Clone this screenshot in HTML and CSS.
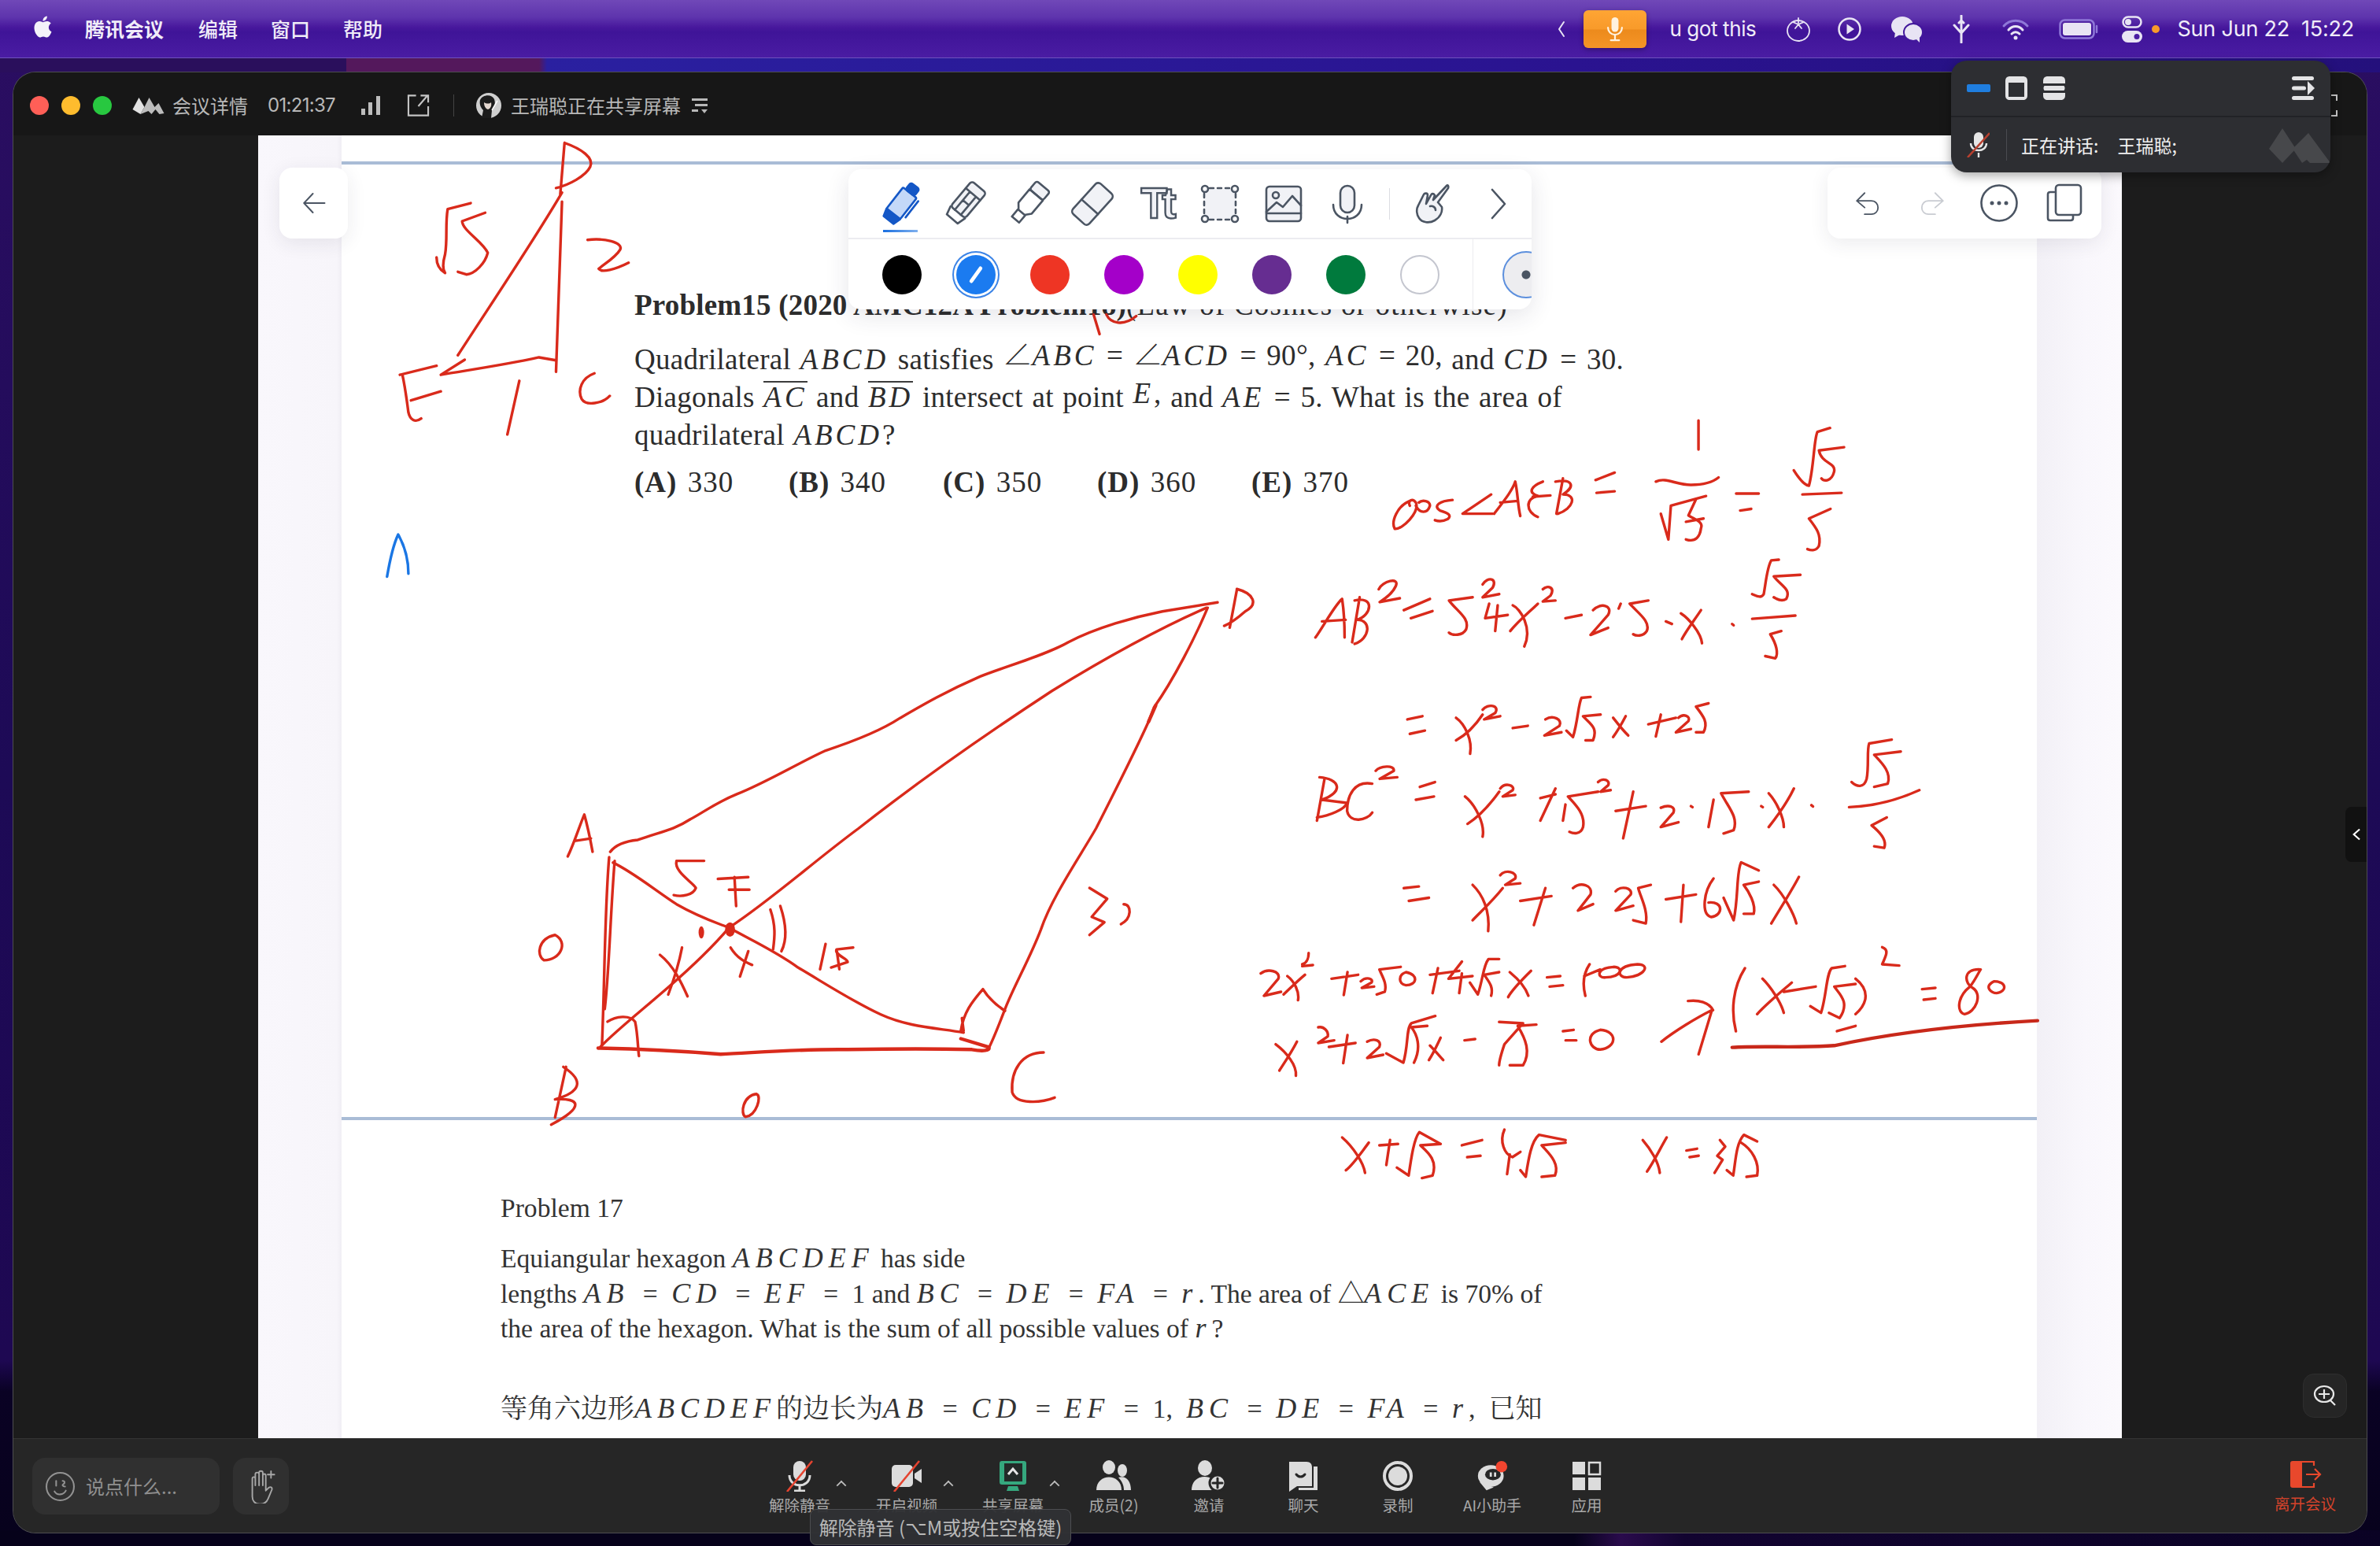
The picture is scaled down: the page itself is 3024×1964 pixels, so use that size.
FILE: index.html
```html
<!DOCTYPE html>
<html lang="zh">
<head>
<meta charset="utf-8">
<title>腾讯会议</title>
<link rel="stylesheet" href="styles.css">
</head>
<body>
<div class="desktop">
  <header class="menubar">
    <svg class="apple" viewBox="0 0 24 24"><path d="M12.152 6.896c-.948 0-2.415-1.078-3.96-1.04-2.04.027-3.91 1.183-4.961 3.014-2.117 3.675-.546 9.103 1.519 12.09 1.013 1.454 2.208 3.09 3.792 3.039 1.52-.065 2.09-.987 3.935-.987 1.831 0 2.35.987 3.96.948 1.637-.026 2.676-1.48 3.676-2.948 1.156-1.688 1.636-3.325 1.662-3.415-.039-.013-3.182-1.221-3.22-4.857-.026-3.04 2.48-4.494 2.597-4.559-1.429-2.09-3.623-2.324-4.39-2.376-2-.156-3.675 1.09-4.61 1.09zM15.53 3.83c.843-1.012 1.4-2.427 1.245-3.83-1.207.052-2.662.805-3.532 1.818-.78.896-1.454 2.338-1.273 3.714 1.338.104 2.715-.688 3.559-1.701"/></svg>
    <span class="menu-app">腾讯会议</span>
    <span class="menu-item">编辑</span>
    <span class="menu-item">窗口</span>
    <span class="menu-item">帮助</span>
    <div class="status">
      <svg class="st st-chev" viewBox="0 0 10 22"><path d="M8 2 2 11l6 9"/></svg>
      <div class="rec"><svg viewBox="0 0 24 36"><rect x="7" y="1" width="10" height="21" rx="5" class="solid"/><path d="M2 16a10 10 0 0 0 20 0M12 27v6M6 34h12"/></svg></div>
      <span class="st-text">u got this</span>
      <svg class="st st-tomato" viewBox="0 0 32 32"><ellipse cx="16" cy="18" rx="14" ry="13"/><path d="M16 2v6M9 7l7 3 7-3M16 10l-4 5M16 10l4 5"/></svg>
      <svg class="st st-play" viewBox="0 0 32 32"><circle cx="16" cy="16" r="13.5"/><path d="M12.500 9.500 22 16l-9.500 6.500z" class="solid"/></svg>
      <svg class="st st-wechat" viewBox="0 0 42 34"><ellipse cx="15" cy="13" rx="14" ry="12" class="solid"/><path d="m6 21-1 7 7-4z" class="solid"/><ellipse cx="29" cy="21" rx="12" ry="11" class="solid edge"/><path d="m33 30 4 4 0-7z" class="solid"/></svg>
      <svg class="st st-fork" viewBox="0 0 26 36"><path d="M13 1v34M4 13l9 10 9-10M13 7l-3 3M13 7l3 3"/></svg>
      <svg class="st st-wifi" viewBox="0 0 36 28"><path class="dim" d="M3 10C11 1 25 1 33 10"/><path d="M9 15c5-6 13-6 18 0M13 20c3-3 7-3 10 0"/><circle cx="18" cy="25" r="2.500" class="solid"/></svg>
      <svg class="st st-batt" viewBox="0 0 50 26"><rect x="1.500" y="1.500" width="43" height="23" rx="6" class="dim"/><rect x="5" y="5" width="36" height="16" rx="3" class="solid"/><path d="M48 9v8" class="dim"/></svg>
      <svg class="st st-ctl" viewBox="0 0 26 34"><rect x="1.500" y="1.500" width="23" height="13" rx="6.500"/><circle cx="8" cy="8" r="4" class="solid"/><rect x="0" y="19" width="26" height="15" rx="7.500" class="solid"/><circle cx="19" cy="26.500" r="3.500" class="hole"/></svg>
      <span class="st-dot"></span>
      <span class="st-clock">Sun Jun 22&nbsp; 15:22</span>
    </div>
  </header>

  <main class="window">
    <div class="titlebar">
      <span class="light red"></span><span class="light amber"></span><span class="light green"></span>
      <svg class="logo" viewBox="0 0 40 24"><path d="M0 17 8 2l7 12-5 9z" class="logo-a"/><path d="M10 23l5-9 6-12 7 12 5-5 7 13-6 1-5-6-5 6-4-4z"/></svg>
      <span class="tb-text tb-info">会议详情</span>
      <span class="tb-text tb-time">01:21:37</span>
      <svg class="tb-signal" viewBox="0 0 26 24"><path d="M1 16h5v8H1zM10 8h5v16h-5zM20 0h5v24h-5z"/></svg>
      <svg class="tb-share" viewBox="0 0 30 28"><path d="M12 1H2v26h26V15M15 15 27 1M18 1h10v9"/></svg>
      <span class="tb-sep"></span>
      <svg class="avatar" viewBox="0 0 32 32"><circle cx="16" cy="16" r="16" fill="#cfcfcf"/><path d="M5 9C8 2 20 1 23 8c2 6 0 11-3 14l-1 10H7l2-10C5 18 4 13 5 9z" fill="#1c1c1c"/><path d="M10 12c3 2 7 2 9 0 1 5-1 8-4 9-3-1-5-4-5-9z" fill="#e4d8d0"/><path d="M27 10 20 22" stroke="#fff" stroke-width="1.500"/></svg>
      <span class="tb-text tb-sharer">王瑞聪正在共享屏幕</span>
      <svg class="tb-menu" viewBox="0 0 20 20"><path d="M0 1h20v3H0zM4 8h16v3H4zM0 15h8v3H0z"/><path d="M12 15h8l-4 5z"/></svg>
      <svg class="tb-full" viewBox="0 0 30 28"><path d="M8 1H1v7M22 1h7v7M1 20v7h7M29 20v7h-7"/></svg>
    </div>

    <section class="stage">
      <div class="doc">
        <div class="paper">
          <hr class="rule">
          <div class="prob15">
            <p class="p15-title">Problem15 (2020 AMC12A Problem18)<span class="plain">(Law of Cosines or otherwise)</span></p>
            <p class="p15-body">Quadrilateral <i>ABCD</i> satisfies <span class="up">∠<i>ABC</i> = ∠<i>ACD</i> = 90°, <i>AC</i> = 20,</span> and <span class="m"><i>CD</i> = 30.</span><br>Diagonals <span class="bar"><i>AC</i></span> and <span class="bar"><i>BD</i></span> intersect at point <span class="up"><i>E</i>,</span> and <span class="m"><i>AE</i> = 5.</span> What is the area of<br>quadrilateral <i>ABCD</i>?</p>
            <div class="choices">
              <span><b>(A)</b> 330</span><span><b>(B)</b> 340</span><span><b>(C)</b> 350</span><span><b>(D)</b> 360</span><span><b>(E)</b> 370</span>
            </div>
          </div>
          <hr class="rule">
          <div class="prob17">
            <p class="p17-title">Problem 17</p>
            <p class="p17-body">Equiangular hexagon <i>ABCDEF</i> has side<br>lengths <span class="m"><i>AB</i> = <i>CD</i> = <i>EF</i> = 1</span> and <span class="m"><i>BC</i> = <i>DE</i> = <i>FA</i> = <i>r</i>.</span> The area of △<i>ACE</i> is 70% of<br>the area of the hexagon. What is the sum of all possible values of <i>r</i>?</p>
            <p class="p17-cn">等角六边形<i>ABCDEF</i>的边长为<span class="m"><i>AB</i> = <i>CD</i> = <i>EF</i> = 1,</span> &nbsp;<span class="m"><i>BC</i> = <i>DE</i> = <i>FA</i> = <i>r</i>,</span> &nbsp;已知</p>
          </div>
        </div>

        <svg class="ink" viewBox="328 172 2368 1655">
          <g transform="translate(430 170) scale(1.0842 .3827)">
            <path d="M265 30C285 50 300 80 295 110 290 140 270 170 255 180M265 30 260 200"/>
            <path d="M262 195C230 350 180 560 140 735"/>
            <path d="M262 225 255 790"/>
            <path d="M120 800C150 785 190 770 235 742L255 752M148 750 120 800"/>
            <path d="M155 230 128 250C125 300 128 350 125 400 122 430 122 450 125 462 118 450 115 435 115 410"/>
            <path d="M172 262 145 290C145 320 170 360 175 395 172 430 160 465 150 467L140 458"/>
            <path d="M292 352C310 345 335 360 330 385 325 410 310 435 305 448 308 462 325 450 340 428"/>
            <path d="M115 770 72 800M120 855 85 885M75 800C78 840 80 880 82 925 84 950 90 960 97 945"/>
            <path d="M300 795C285 810 280 850 285 880 290 905 310 895 318 870"/>
            <path d="M212 820 198 998"/>
            <path d="M885 600 892 665M900 600C905 630 920 640 935 605"/>
          </g>
          <g class="blue" transform="translate(430 170) scale(1.0842 .3827)">
            <path d="M57 1470C60 1420 65 1360 70 1330 78 1370 82 1420 82 1460"/>
          </g>

          <g transform="translate(600 740) scale(.7015 .4592)">
            <path d="M250 745C260 725 280 715 300 712 340 690 365 685 395 655 420 635 440 610 480 585 530 555 590 500 640 465 690 440 740 410 775 375 820 335 860 300 920 260 970 230 1040 200 1080 165 1130 125 1200 95 1250 80L1350 55"/>
            <path d="M255 775C290 800 330 850 370 890 410 925 440 940 465 955 500 985 550 1020 590 1065 640 1110 690 1160 740 1195 790 1230 840 1232 890 1245"/>
            <path d="M232 1285C260 1240 310 1180 355 1120 400 1060 440 1000 465 955 540 880 620 770 700 680 800 560 930 420 1050 300 1130 225 1240 130 1330 70"/>
            <path d="M1332 70C1310 150 1270 270 1235 345L1225 385C1200 470 1160 590 1130 680 1100 760 1050 870 1030 960 1010 1040 980 1120 965 1180 955 1220 945 1260 935 1290"/>
            <path class="thick" d="M1238 340 1225 385"/>
            <path d="M248 760C240 900 240 1100 235 1280M258 770C250 920 248 1080 240 1180"/>
            <path class="thick" d="M228 1288C300 1290 370 1295 450 1305 520 1300 600 1290 680 1292 760 1290 850 1290 905 1292 925 1298 940 1295 935 1285L885 1262"/>
            <path d="M885 1240C890 1190 905 1160 925 1125 935 1150 950 1170 965 1185M887 1205 890 1240"/>
            <path d="M245 1215C260 1200 285 1195 295 1215 300 1250 300 1290 302 1310"/>
            <path d="M173 758C185 720 195 670 203 642 210 680 215 720 218 745M185 715 215 708"/>
            <path d="M150 975C120 985 115 1030 130 1045 160 1045 175 995 150 975Z"/>
            <path d="M420 770 370 770C365 800 400 830 405 845 400 865 380 870 365 865"/>
            <path d="M445 820 500 815M465 850 502 850M475 815 478 895"/>
            <ellipse class="dotfill" cx="467" cy="960" rx="9" ry="20"/>
            <ellipse class="dotfill" cx="415" cy="968" rx="5" ry="17"/>
            <path d="M540 905C550 950 548 980 545 1015M558 895C570 950 570 990 560 1020"/>
            <path d="M468 1010C480 1040 495 1050 507 1058M500 1020 485 1090"/>
            <path d="M340 1030C365 1060 380 1110 390 1145M380 1010C375 1050 365 1100 355 1140"/>
            <path d="M640 1000 630 1070M690 1010 660 1015C655 1030 680 1040 680 1050L650 1065M660 1015 665 1070"/>
            <path d="M1118 845 1150 875 1122 925 1145 940 1118 975M1180 890C1195 890 1195 930 1175 945"/>
            <path d="M1385 20 1372 125M1385 18C1415 30 1425 60 1400 80 1385 100 1370 115 1362 120"/>
            <path d="M170 1340 150 1480M165 1340C205 1380 195 1410 150 1430 195 1425 205 1450 143 1500"/>
            <path d="M1035 1300C995 1300 975 1350 978 1410 985 1445 1030 1440 1055 1425"/>
            <path d="M515 1415C490 1420 485 1470 495 1478 515 1475 525 1420 515 1415Z"/>
          </g>

          <g transform="translate(1600 520) scale(.6378 .4082)">
            <path d="M300 285C275 300 262 350 270 372 285 375 320 320 312 290 305 275 295 285 300 300M312 300C320 325 335 325 340 300 340 285 325 280 318 290M385 282C360 285 345 300 360 315 375 322 385 330 375 342 365 350 355 348 350 345"/>
            <path d="M462 265 405 325 465 325"/>
            <path d="M468 325C490 280 505 250 510 225 515 260 515 300 520 332M480 290 515 285"/>
            <path d="M565 225C540 240 535 260 555 270 530 275 530 320 555 335M545 272 580 268"/>
            <path d="M605 215 592 325M590 225C625 215 630 240 605 265 635 265 625 310 595 325"/>
            <path d="M670 220 708 197M672 260 708 255"/>
            <path d="M875 35 875 125M790 225C810 210 830 235 860 235 885 235 905 225 915 212"/>
            <path d="M800 325 815 405 820 300 890 270M870 280 855 330C870 345 885 350 880 370 878 395 870 415 850 405M850 350 885 340"/>
            <path d="M950 262 995 262M958 315 980 310"/>
            <path d="M1065 190C1075 215 1085 235 1095 238 1105 180 1105 90 1112 70L1137 58M1165 118 1115 128C1120 170 1150 165 1145 195 1140 225 1125 225 1120 215"/>
            <path d="M1082 265 1160 260M1138 310 1095 340C1110 370 1120 390 1115 425 1110 440 1100 440 1092 435"/>

            <path d="M112 710C130 670 150 610 165 590 170 640 170 680 170 710M125 660 172 655"/>
            <path d="M200 585 185 725M190 595C230 580 225 640 195 655 225 655 220 715 190 730"/>
            <path d="M238 560C245 535 280 520 272 550 265 575 250 590 240 600L280 588"/>
            <path d="M288 625 340 590M302 650 345 628"/>
            <path d="M425 585 378 595C395 630 420 650 412 685 405 705 385 705 378 695"/>
            <path d="M445 545C455 520 475 525 465 555L445 585 478 575"/>
            <path d="M458 605 450 650 495 640M475 610 470 690"/>
            <path d="M505 610C520 620 545 680 528 738M555 605C535 635 515 660 500 690"/>
            <path d="M565 560C575 545 590 555 580 580L565 598 590 595"/>
            <path d="M610 650 642 640M665 625C680 600 705 610 695 640L660 702 695 680M720 605 716 620"/>
            <path d="M775 595 738 605C755 635 780 660 772 690 765 708 750 705 745 700M810 660 822 668"/>
            <path d="M840 635C855 650 880 695 882 728M880 625C865 660 850 690 842 715M942 668 945 672"/>
            <path d="M982 575C990 580 1000 590 1005 575 1010 530 1012 490 1020 470L1035 468M1078 515 1025 520C1040 550 1060 560 1050 590 1040 600 1030 590 1025 585"/>
            <path d="M982 652 1068 642M1040 690 1018 700C1030 730 1035 760 1028 775L1008 768"/>

            <path d="M295 965 325 955M300 1010 330 1000"/>
            <path d="M392 960C410 980 425 1030 420 1072M445 950C430 985 410 1015 392 1030"/>
            <path d="M445 935C455 915 480 920 470 945L448 965 480 955M505 992 535 985"/>
            <path d="M570 965C585 950 605 965 598 985L568 1015 602 1005"/>
            <path d="M612 1000 625 1020C635 970 635 920 642 898L660 895M680 950 645 955C660 980 675 990 665 1030L650 1030"/>
            <path d="M705 960C715 980 725 1000 735 1015M730 955C720 985 712 1005 705 1020"/>
            <path d="M775 980 830 960M800 950 790 1018"/>
            <path d="M835 960C845 945 860 955 855 970L830 1005 860 995M895 915 870 925C885 955 895 975 885 1005L870 1005"/>

            <path d="M120 1145C160 1150 170 1190 125 1215L175 1225C170 1245 140 1265 115 1270M130 1150 115 1280"/>
            <path d="M225 1165C190 1155 175 1200 175 1250 180 1290 215 1280 225 1255"/>
            <path d="M232 1125C240 1110 270 1105 268 1125L240 1150 275 1145M320 1175 350 1160M312 1215 348 1205"/>
            <path d="M410 1205C430 1230 450 1290 445 1330M478 1190C455 1240 435 1270 415 1290"/>
            <path d="M480 1180C490 1160 510 1170 505 1185L485 1205 510 1200"/>
            <path d="M590 1180 560 1280M560 1210 590 1198M610 1230 605 1280"/>
            <path d="M675 1190 615 1205C630 1230 650 1260 645 1300 640 1325 625 1320 618 1315M675 1160C685 1145 700 1155 695 1170L680 1190 700 1185"/>
            <path d="M710 1250 770 1235M745 1190 725 1335M800 1240C815 1230 830 1235 825 1255L800 1300 835 1285M860 1235 863 1238"/>
            <path d="M905 1215 895 1300M975 1190 920 1195C935 1240 955 1270 945 1310L925 1320M1000 1235 1003 1238"/>
            <path d="M1015 1195C1030 1220 1045 1270 1045 1300M1065 1180C1050 1230 1030 1270 1015 1300M1100 1232 1103 1236"/>
            <path d="M1180 1160C1190 1175 1205 1180 1210 1150 1215 1110 1210 1060 1215 1040L1260 1028M1278 1065 1225 1075C1240 1100 1260 1130 1252 1165L1225 1175"/>
            <path d="M1175 1238C1230 1235 1280 1210 1315 1185M1250 1270 1220 1295C1240 1320 1250 1345 1245 1365L1225 1360"/>

            <path d="M288 1490 318 1485M298 1530 338 1520"/>
            <path d="M425 1480C445 1510 460 1560 456 1624M485 1490C465 1530 440 1565 425 1590"/>
            <path d="M480 1450C490 1430 515 1440 510 1460L490 1480 520 1475M520 1530 582 1515M570 1490 547 1605"/>
            <path d="M625 1490C640 1470 665 1480 660 1510L635 1560 665 1540M710 1500C720 1480 745 1490 740 1510L710 1560 745 1545"/>
            <path d="M780 1480 755 1490C760 1520 775 1560 770 1600L745 1590M810 1525 870 1510M845 1480 840 1595"/>
            <path d="M905 1460C885 1500 880 1570 900 1580 925 1575 925 1530 895 1535"/>
            <path d="M925 1520 945 1590C955 1520 950 1440 960 1410L995 1435M995 1470 965 1480C975 1500 990 1540 985 1570L965 1570"/>
            <path d="M1025 1480C1045 1510 1065 1570 1070 1600M1075 1455C1060 1500 1035 1560 1020 1600"/>
          </g>

          <g transform="translate(1560 1140) scale(.676 .3333)">
            <path d="M62 290C75 270 100 280 95 310L68 375 100 360M112 300C125 320 135 360 132 392M145 295C130 320 118 345 105 370M140 255C150 250 152 225 152 212M140 262 160 258"/>
            <path d="M195 310 245 295M225 285 218 372M250 320C260 300 275 310 270 325L252 345 275 340M325 265 285 275C290 300 300 330 295 360L280 370"/>
            <path d="M335 285C320 295 320 330 335 335 355 335 360 295 335 285ZM380 295 435 280M395 270 385 365M440 245 415 310 460 300M440 290 435 365"/>
            <path d="M455 325 470 370C480 310 480 260 490 235L510 235M510 285 482 295C490 320 500 340 495 375"/>
            <path d="M530 285C545 310 560 345 565 375M570 280C555 310 535 350 527 380M600 305 625 300M605 340 630 335"/>
            <path d="M680 255C670 285 665 320 672 375M670 300 700 275M725 265C690 270 695 310 710 305 740 305 745 265 725 265ZM770 255C730 260 730 305 750 305 785 300 795 255 770 255Z"/>

            <path d="M90 560C110 590 130 640 128 680M130 550C120 590 105 635 97 660M170 495C180 490 190 510 188 530L170 555 200 545"/>
            <path d="M190 570 240 555M225 525 217 632M262 550C275 535 290 545 285 570L262 612 292 600"/>
            <path d="M298 595 330 630C340 560 335 500 345 480L390 452M375 490 345 495C355 520 365 570 350 630"/>
            <path d="M380 565C390 585 400 610 405 620M400 535C392 570 385 600 378 620M445 545 465 540"/>
            <path d="M510 475 555 480 520 560C515 590 510 620 510 640M580 485 545 490C560 540 570 590 555 640L530 640"/>
            <path d="M630 510 650 505M635 545 655 545M700 505C670 520 680 580 700 580 730 575 735 510 700 505Z"/>
            <path d="M815 550C840 510 880 460 910 430L885 598M865 395C885 390 905 400 912 430"/>
            <path d="M972 270C950 340 945 430 955 510"/>
            <path d="M1005 310C1020 340 1040 400 1045 440M1060 325C1040 360 1010 410 995 445M1045 360 1105 340"/>
            <path d="M1095 415 1115 440C1125 380 1125 290 1135 270L1160 262M1180 330 1140 340C1150 370 1170 400 1150 460L1130 440M1180 310C1205 350 1205 400 1180 445"/>
            <path d="M1230 190C1245 200 1235 230 1230 255L1262 260M1305 350 1330 345M1308 390 1330 385"/>
            <path d="M1415 275C1380 270 1385 330 1400 345 1420 370 1405 440 1385 445 1370 440 1370 380 1395 340 1405 315 1410 290 1415 275ZM1440 320C1420 340 1435 365 1445 365 1465 360 1465 320 1440 320Z"/>
            <path d="M1145 510 1180 490"/>
            <path class="under" d="M948 572C1000 565 1080 575 1140 565 1220 530 1340 490 1522 470"/>

            <path d="M215 915C235 950 255 1010 258 1050M265 935C250 975 235 1020 222 1040M285 945 320 940M305 925 298 1020"/>
            <path d="M318 1030 340 1060C345 990 350 920 360 895L400 940 362 945C375 970 395 1000 385 1060L365 1070"/>
            <path d="M440 945 478 925M450 990 475 985M520 885C510 930 520 980 535 990L550 970M530 980 525 1055"/>
            <path d="M550 1040 560 1065C565 1000 570 930 585 905L635 925M635 935 590 945C600 970 625 1010 615 1060L590 1065"/>
            <path d="M780 925C795 960 810 1010 812 1050M825 915C812 960 800 1010 788 1045M862 965 882 958M868 990 885 985"/>
            <path d="M925 925 935 950 920 985 930 1000 915 1050M938 1040 950 1060C955 1000 955 940 970 905L995 930M965 935C985 960 1000 1010 995 1060L975 1065"/>
          </g>
        </svg>

        <div class="float-btn back">
          <svg class="wb-ico" viewBox="0 0 48 48"><path d="M42 24H8M22 8 7 24l15 16"/></svg>
        </div>

        <div class="wb-tools">
          <div class="tool-row">
            <div class="slot active">
              <svg class="wb-ico pen" viewBox="0 0 48 48"><g transform="rotate(38 24 24)"><path class="pen-tip" d="M13 40h22l-3 10H16z"/><rect class="pen-body" x="13" y="6" width="22" height="34" rx="2"/><rect class="pen-tip" x="17" y="-5" width="14" height="11" rx="3"/><path d="M39 8v26"/></g></svg>
            </div>
            <div class="slot"><svg class="wb-ico tint" viewBox="0 0 48 48"><g transform="rotate(40 24 24)"><rect x="12" y="-4" width="24" height="42" rx="4"/><path d="M12 8h24M19 8v30M29 8v30M19 22h10M12 38l3 11h18l3-11"/></g></svg></div>
            <div class="slot"><svg class="wb-ico tint" viewBox="0 0 48 48"><g transform="rotate(40 24 24)"><rect x="13" y="-5" width="22" height="14" rx="3"/><path d="M13 9h22v22l-6 7H19l-6-7zM18 38v12h12V38"/></g></svg></div>
            <div class="slot"><svg class="wb-ico tint" viewBox="0 0 48 48"><g transform="rotate(42 24 24)"><rect x="10" y="-2" width="28" height="52" rx="5"/><path d="M10 29h28"/></g></svg></div>
            <div class="slot"><span class="tt">Tt</span></div>
            <div class="slot"><svg class="wb-ico" viewBox="0 0 48 48"><rect class="plainfill" x="5" y="5" width="38" height="38"/><path class="dash" d="M11 4h26M11 44h26M4 11v26M44 11v26"/><rect x="1" y="1" width="8" height="8" rx="4"/><rect x="39" y="1" width="8" height="8" rx="4"/><rect x="1" y="39" width="8" height="8" rx="4"/><rect x="39" y="39" width="8" height="8" rx="4"/></svg></div>
            <div class="slot"><svg class="wb-ico tint" viewBox="0 0 48 48"><rect x="2" y="2" width="44" height="44" rx="4"/><path d="M2 34 15 22l8 6 12-14 11 12M2 36h44"/><circle cx="14" cy="13" r="4"/></svg></div>
            <div class="slot"><svg class="wb-ico" viewBox="0 0 48 48"><rect class="tintfill" x="15" y="1" width="18" height="34" rx="9"/><path d="M6 25c0 24 36 24 36 0M24 40v8"/></svg></div>
            <span class="tool-sep"></span>
            <div class="slot"><svg class="wb-ico tint" viewBox="0 0 48 48"><path d="M42 1 25 19l2-6c-2-3-4-2-5 0l-6 11 2-11c0-3-4-3-5-1L6 26c-3 5-2 12 1 16 4 6 13 7 20 3 7-4 10-11 9-17l-5-6 13-18c1-3-1-5-2-3z"/><path d="M21 27c3-1 7 1 7 5"/></svg></div>
            <div class="slot slot-next"><svg class="wb-ico" viewBox="0 0 48 48"><path d="M15 6l16 18-16 18"/></svg></div>
          </div>
          <div class="color-row">
            <span class="swatch black"></span>
            <span class="swatch sel"><svg viewBox="0 0 24 24"><path d="M17 5 7 19"/></svg></span>
            <span class="swatch red2"></span>
            <span class="swatch violet"></span>
            <span class="swatch yellow"></span>
            <span class="swatch deep"></span>
            <span class="swatch forest"></span>
            <span class="swatch blank"></span>
            <span class="color-sep"></span>
            <span class="size-pick"></span>
          </div>
        </div>

        <div class="float-btn actions">
          <div class="act"><svg class="wb-ico sm" viewBox="0 0 48 48"><path d="M20 6 6 20l14 12M6 20h26c16 0 16 24 0 24H20"/></svg></div>
          <div class="act"><svg class="wb-ico sm faint" viewBox="0 0 48 48"><path d="M28 6l14 14-14 12M42 20H16C0 20 0 44 16 44h12"/></svg></div>
          <div class="act"><svg class="wb-ico" viewBox="0 0 48 48"><circle cx="24" cy="24" r="22.500"/><circle cx="15" cy="24" r="2.500" class="ink-dot"/><circle cx="24" cy="24" r="2.500" class="ink-dot"/><circle cx="33" cy="24" r="2.500" class="ink-dot"/></svg></div>
          <div class="act"><svg class="wb-ico" viewBox="0 0 48 48"><path d="M10 10H5c-2 0-3 1-3 3v30c0 2 1 3 3 3h26c2 0 3-1 3-3v-3"/><rect class="pagefill" x="12" y="1" width="32" height="38" rx="4"/></svg></div>
        </div>
      </div>

      <div class="collapse"><svg viewBox="0 0 14 22"><path d="M12 3 3 11l9 8"/></svg></div>
      <div class="zoom-btn"><svg viewBox="0 0 30 28"><ellipse cx="14" cy="12" rx="12" ry="10"/><path d="M14 6v12M7 12h14M22 20l6 6"/></svg></div>
    </section>

    <footer class="toolbar">
      <div class="tb-left">
        <div class="say">
          <svg viewBox="0 0 36 36"><circle cx="18" cy="18" r="17"/><path d="M13 11v6M21 11c3 0 3 3 1 4s-1 3 2 3M11 24c3 5 11 5 14-1"/></svg>
          <span>说点什么...</span>
        </div>
        <div class="raise">
          <svg viewBox="0 0 40 46"><path d="M8 30V13c0-3 4-3 4 0v9-15c0-3 5-3 5 0v15V5c0-3 5-3 5 0v17-13c0-3 4-3 4 0v20l4-4c3-2 5 0 4 3l-5 12c-2 5-6 7-11 7-7 0-10-5-10-10z"/><path d="M33 3v9M28.500 7.500h9"/></svg>
        </div>
      </div>

      <div class="tb-center">
        <div class="item wide">
          <svg viewBox="0 0 40 40"><rect class="fill" x="12" y="1" width="16" height="25" rx="8"/><path d="M7 19c0 17 26 17 26 0M20 32v7M13 39h14"/><path class="slash" d="M4 40 36 1"/></svg>
          <span class="caret"></span><span class="lab">解除静音</span>
        </div>
        <div class="item wide">
          <svg viewBox="0 0 40 40"><rect class="fill" x="1" y="6" width="27" height="28" rx="5"/><path class="fill" d="M30 17l9-6v18l-9-6z"/><path class="slash" d="M4 40 36 1"/></svg>
          <span class="caret"></span><span class="lab">开启视频</span>
        </div>
        <div class="item share">
          <svg viewBox="0 0 40 40"><rect class="gr" x="3" y="1" width="34" height="30" rx="3"/><rect class="gr-in" x="9" y="4" width="23" height="23"/><path class="gr-up" d="M14 18l6-7 6 7"/><path class="gr" d="M14 33h12l2 6H12z"/></svg>
          <span class="caret"></span><span class="lab">共享屏幕</span>
        </div>
        <div class="item members">
          <svg viewBox="0 0 44 40"><ellipse class="fill" cx="16" cy="9" rx="8" ry="9"/><ellipse class="fill" cx="33" cy="13" rx="6" ry="8"/><path class="fill" d="M0 38c0-22 32-22 32 0z"/><path class="fill" d="M28 22c10-3 16 5 16 16h-9c0-7-3-12-7-16z"/></svg>
          <span class="lab">成员(2)</span>
        </div>
        <div class="item">
          <svg viewBox="0 0 44 40"><ellipse class="fill" cx="17" cy="10" rx="9" ry="10"/><path class="fill" d="M0 38c0-22 30-22 32-4v4z"/><circle class="fill ring-d" cx="33" cy="29" r="10"/><path class="dark" d="M33 23v12M27 29h12"/></svg>
          <span class="lab">邀请</span>
        </div>
        <div class="item">
          <svg viewBox="0 0 40 40"><path class="fill" d="M2 2h22c5 0 7 3 7 7v24H12l-10 7z"/><path class="dark" d="M11 18c3 4 8 4 11 0"/><path class="fill" d="M33 8h5v30h-5z"/><path class="fill" d="M14 35h24v3H14z"/></svg>
          <span class="lab">聊天</span>
        </div>
        <div class="item">
          <svg viewBox="0 0 40 40"><ellipse class="ringo" cx="20" cy="20" rx="17" ry="17"/><ellipse class="fill" cx="20" cy="20" rx="12" ry="12"/></svg>
          <span class="lab">录制</span>
        </div>
        <div class="item ai">
          <svg viewBox="0 0 44 44"><ellipse class="fill" cx="20" cy="22" rx="18" ry="15"/><ellipse class="dark-fill" cx="23" cy="20" rx="11" ry="8"/><path class="lite" d="M20 17v6M26 17v6"/><path class="fill" d="M4 30l10 12 10-4z"/><circle class="notice" cx="35" cy="9" r="8"/></svg>
          <span class="lab">AI小助手</span>
        </div>
        <div class="item">
          <svg viewBox="0 0 40 40"><path class="fill" d="M2 2h16v16H2zM2 22h16v16H2zM22 22h16v16H22z"/><path class="fill-o" d="M23 3h14v15H23z"/></svg>
          <span class="lab">应用</span>
        </div>
      </div>

      <div class="tb-right">
        <div class="leave">
          <svg viewBox="0 0 40 34"><path class="leave-fill" d="M3 0h12v34H3c-2 0-3-1-3-3V3c0-2 1-3 3-3z"/><path class="leave-st" d="M15 1h15v5M15 33h15v-5M20 17h18M31 10l7 7-7 7"/></svg>
          <span>离开会议</span>
        </div>
      </div>

      <div class="tooltip">解除静音 (⌥M或按住空格键)</div>
    </footer>
  </main>

  <aside class="speaker">
    <div class="sp-top">
      <span class="sp-pill"></span>
      <svg class="sp-win" viewBox="0 0 28 30"><path fill-rule="evenodd" d="M6 0h16c4 0 6 2 6 6v18c0 4-2 6-6 6H6c-4 0-6-2-6-6V6c0-4 2-6 6-6zM4 8v18h20V8z"/></svg>
      <svg class="sp-win" viewBox="0 0 28 30"><path d="M6 0h16c4 0 6 2 6 6v3H0V6c0-4 2-6 6-6zM2 12h24c2 0 2 6 0 6H2c-2 0-2-6 0-6zM0 21h28v3c0 4-2 6-6 6H6c-4 0-6-2-6-6z"/></svg>
      <svg class="sp-more" viewBox="0 0 30 30"><rect x="1" y="0" width="28" height="5" rx="2.500"/><rect x="1" y="25" width="28" height="5" rx="2.500"/><rect x="1" y="12.500" width="18" height="5" rx="2.500"/><path d="M21 6l9 9-9 9z"/></svg>
    </div>
    <div class="sp-bottom">
      <svg class="sp-mic" viewBox="0 0 30 32"><rect class="m" x="10" y="0" width="12" height="20" rx="6"/><path class="ms" d="M6 14c0 12 20 12 20 0M16 26v6"/><path class="sl" d="M2 32 30 1"/></svg>
      <span class="sp-line"></span>
      <span class="sp-text">正在讲话:</span>
      <span class="sp-text sp-name">王瑞聪;</span>
      <svg class="sp-mark" viewBox="0 0 78 44"><path d="M0 26 17 0l17 26-17 18z"/><path d="M30 26 50 6l28 38H52l-4-4-6 4z"/></svg>
    </div>
  </aside>
</div>
</body>
</html>
```

FILE: styles.css
```css
*{box-sizing:border-box}
html,body{margin:0;padding:0}
body{width:3024px;height:1964px;overflow:hidden;font-family:"Noto Sans CJK SC","Noto Sans",sans-serif}
svg{display:block}
.desktop{position:relative;width:3024px;height:1964px;display:flex;flex-direction:column;
  background:
    linear-gradient(90deg,#2a0f5c 0,#2a0f5c 440px,#54185c 440px,#54185c 685px,#2a20a0 695px,#2a1390 2000px,#24107c 3024px) top/100% 92px no-repeat,
    linear-gradient(90deg,#06021a 0,#06021a 2000px,#2a0b4c 2060px,#120430 2140px,#0a0224 3024px) bottom/100% 20px no-repeat,
    linear-gradient(180deg,#2b0e62 0,#1d0a56 50%,#1e0852 88%,#0a0224 90%,#07021c 100%)}

/* menu bar */
.menubar{height:74px;flex:none;display:flex;align-items:center;padding-left:41px;color:#f0ecf8;border-bottom:1px solid #6f52bd;
  background:linear-gradient(180deg,#7048b8 0,#5e34ad 30%,#47179c 48%,#3f1498 56%,#4a1ca3 100%)}
.apple{width:27px;height:32px;fill:#f4f2fa;margin-right:40px;margin-top:-5px}
.menu-app{font-size:25px;font-weight:700;width:101px;margin-right:43px;line-height:1;white-space:nowrap}
.menu-item{font-size:25px;font-weight:500;line-height:1;margin-right:42px;white-space:nowrap}
.status{margin-left:auto;display:flex;align-items:center;height:100%;padding-right:33px}
.st{fill:none;stroke:#e8e4f4;stroke-width:2.500px;stroke-linecap:round;stroke-linejoin:round}
.st .solid,.rec .solid{fill:#e8e4f4;stroke:none}
.st .edge{stroke:#42189c;stroke-width:2px}
.st .dim{stroke:#8f78d8}
.st .hole{fill:#4a1ca3;stroke:none}
.st-chev{width:10px;height:22px;margin-right:23px;stroke-width:2px}
.rec{width:80px;height:48px;border-radius:6px;background:linear-gradient(180deg,#ffa534 0,#f89a2a 50%,#ec8a1c 52%,#f59527 100%);display:flex;align-items:center;justify-content:center;box-shadow:0 2px 6px rgba(0,0,0,.3)}
.rec svg{width:22px;height:32px;fill:none;stroke:#fff2df;stroke-width:2.500px;stroke-linecap:round}
.rec .solid{fill:#fff2df}
.st-text{font-family:Inter,"Liberation Sans",sans-serif;font-size:26px;margin-left:29px;margin-right:36px;width:112px;white-space:nowrap;line-height:1;letter-spacing:-.4px}
.st-tomato{width:32px;height:32px;margin-right:33px;stroke-width:1.800px}
.st-play{width:32px;height:32px;margin-right:36px}
.st-wechat{width:42px;height:34px;margin-right:35px}
.st-fork{width:26px;height:36px;margin-right:38px;stroke-width:3px}
.st-wifi{width:36px;height:28px;margin-right:37px;stroke-width:3px}
.st-batt{width:50px;height:26px;margin-right:30px}
.st-ctl{width:26px;height:34px;margin-right:12px}
.st-dot{width:10px;height:10px;border-radius:50%;background:#f89a2a;margin-right:22px}
.st-clock{font-family:Inter,"Liberation Sans",sans-serif;font-size:27px;line-height:1;white-space:nowrap;letter-spacing:-.2px}

/* window */
.window{margin:18px 17px 0;width:2990px;height:1855px;flex:none;border-radius:28px;display:flex;flex-direction:column;position:relative;background:#1c1c1c;box-shadow:0 0 0 1px #4d4d50}
.titlebar{height:80px;flex:none;background:#171717;border-radius:28px 28px 0 0;display:flex;align-items:center;padding:3px 0 0 21px;color:#b8b8b8}
.light{width:24px;height:24px;border-radius:50%;margin-right:16px}
.light.red{background:#ff5f57}
.light.amber{background:#febc2e}
.light.green{background:#28c840}
.logo{width:41px;height:24px;fill:#bdbdbd;margin-left:10px;margin-right:10px}
.logo .logo-a{fill:#e2e2e2}
.tb-text{font-size:24px;line-height:1;white-space:nowrap}
.tb-info{width:96px;margin-right:25px}
.tb-time{font-family:Inter,"Liberation Sans",sans-serif;width:88px;margin-right:30px;letter-spacing:-.7px}
.tb-signal{width:26px;height:24px;fill:#bdbdbd;margin-right:33px}
.tb-share{width:29px;height:28px;fill:none;stroke:#c4c4c4;stroke-width:2.200px;margin-right:30px}
.tb-sep{width:1px;height:28px;background:#444;margin-right:28px}
.avatar{width:32px;height:32px;margin-right:12px}
.tb-sharer{width:216px;margin-right:14px}
.tb-menu{width:20px;height:20px;fill:#b8b8b8}
.tb-full{width:30px;height:28px;fill:none;stroke:#c4c4c4;stroke-width:2px;margin-left:auto;margin-right:37px}

/* stage */
.stage{height:1655px;flex:none;position:relative;background:#1c1c1c;padding:0 311px}
.doc{position:relative;width:2368px;height:1655px;background:linear-gradient(90deg,#f9f7fc 0,#f7f5fa 100px,#f1eff5 105px,#f1eff5 106px,#fff 106px,#fff 2260px,#f2f0f6 2260px,#f9f7fc 2320px,#fbf9fd 100%);overflow:hidden}
.paper{margin:0 108px 0 106px;height:1655px;background:#fff;color:#2c2c2c;font-family:"Liberation Serif","Noto Serif CJK SC","Noto Sans CJK SC",serif}
.paper p{margin:0}
.paper i{font-style:italic}
.rule{height:4px;margin:0;border:0;background:#a9bcd6}
.rule:first-child{margin-top:33px}
.prob15{height:1210px;padding-left:372px;font-size:37px;overflow:hidden}
.prob15 i{letter-spacing:4px}
.p15-title{padding-top:154px;line-height:50px;font-weight:700;white-space:nowrap;letter-spacing:.2px}
.plain{font-weight:400;letter-spacing:1.200px}
.p15-body{margin-top:20px!important;line-height:48px;white-space:nowrap;letter-spacing:.3px;word-spacing:2px}
.up{vertical-align:5px;line-height:1;word-spacing:3px}
.prob15 .m{word-spacing:3px}
.bar{display:inline-block;line-height:38px;border-top:2px solid #3c3c3c}
.choices{display:grid;grid-template-columns:repeat(5,196px);margin-top:12px;line-height:48px;font-size:37px;white-space:nowrap;letter-spacing:1px;word-spacing:3px}
.choices b{font-weight:700}
.prob17{padding-left:202px;font-size:33.600px;color:#333}
.prob17 i{font-size:36px;letter-spacing:7px;line-height:1}
.prob17 .m{word-spacing:9px}
.p17-title{margin-top:90px!important;line-height:44px}
.p17-body{margin-top:20px!important;line-height:44.500px;white-space:nowrap}
.p17-cn{margin-top:57px!important;line-height:44px;white-space:nowrap;font-size:34px}

/* ink */
.ink{position:absolute;left:0;top:0;width:2368px;height:1655px;fill:none;stroke:#d92a1b;stroke-width:3.400px;stroke-linecap:round;stroke-linejoin:round}
.ink path{vector-effect:non-scaling-stroke}
.ink .blue{stroke:#1a76e4}
.ink .thick{stroke-width:4.400px}
.ink .under{stroke-width:4.400px;stroke:#c8281a}
.ink .dotfill{fill:#d92a1b;stroke:none}

/* floating board controls */
.float-btn{position:absolute;top:41px;height:90px;background:#fff;border-radius:16px;box-shadow:0 6px 24px rgba(40,40,70,.09);display:flex;align-items:center}
.back{left:27px;width:87px;justify-content:center}
.back .wb-ico{width:36px;height:36px}
.actions{left:1994px;width:348px;padding-left:8px}
.act{width:84px;display:flex;justify-content:center}
.wb-ico{width:48px;height:48px;fill:none;stroke:#4b5563;stroke-width:2.600px;stroke-linecap:round;stroke-linejoin:round;overflow:visible}
.wb-ico.sm{width:34px;height:34px}
.wb-ico.faint{stroke:#c9ccd2}
.wb-ico.tint rect,.wb-ico.tint path:first-child,.wb-ico .tintfill{fill:#f1f2f6}
.wb-ico .plainfill{fill:#f1f2f6;stroke:none}
.ink-dot{fill:#4b5563;stroke:none}
.pagefill{fill:#fff}
.wb-tools{position:absolute;left:750px;top:43px;width:868px;height:178px;background:#fff;border-radius:16px;overflow:hidden;box-shadow:0 8px 30px rgba(40,40,70,.12)}
.tool-row{height:89px;padding-left:26px;display:flex;align-items:center;border-bottom:2px solid #ececf0}
.slot{width:81px;display:flex;justify-content:center;align-items:center;position:relative;height:60px}
.slot.active::after{content:"";position:absolute;left:18px;width:44px;height:3px;bottom:-6px;background:linear-gradient(90deg,#1a6fe0,#7fb0ee)}
.slot-next{margin-left:4px}
.pen{stroke:#1457c6}
.pen .pen-body{fill:#c4d8f8}
.pen .pen-tip{fill:#1457c6}
.dash{stroke-dasharray:5 5}
.tt{font-family:"Liberation Sans",sans-serif;font-weight:700;font-size:55px;line-height:1;letter-spacing:-7px;color:#f1f2f6;-webkit-text-stroke:2.400px #4b5563}
.tool-sep{width:1px;height:40px;background:#dcdde2;margin:0 13px}
.color-row{height:89px;padding-left:21px;display:flex;align-items:center}
.swatch{width:50px;height:50px;border-radius:50%;margin:0 22px;flex:none}
.swatch.black{background:#000}
.swatch.sel{background:#1b7bf0;box-shadow:0 0 0 3px #fff,0 0 0 5px #3c84e6;display:flex;align-items:center;justify-content:center}
.swatch.sel svg{width:28px;height:28px;fill:none;stroke:#fff;stroke-width:4px;stroke-linecap:round}
.swatch.red2{background:#ee3524}
.swatch.violet{background:#a400c9}
.swatch.yellow{background:#ffff00}
.swatch.deep{background:#662d91}
.swatch.forest{background:#007a3d}
.swatch.blank{background:#fff;border:2px solid #c4c6cf}
.color-sep{flex:none;width:1px;height:100%;background:#ececf0;margin-left:20px}
.size-pick{flex:none;width:60px;height:60px;border-radius:50%;background:radial-gradient(circle,#4b5563 0,#4b5563 5px,#ededf0 6px);border:2px solid #5c8fdd;margin-left:37px}

/* stage edge */
.collapse{position:absolute;right:0;top:853px;width:27px;height:70px;background:#111;border-radius:8px 0 0 8px;display:flex;align-items:center;justify-content:center}
.collapse svg{width:12px;height:18px;fill:none;stroke:#fff;stroke-width:2.600px}
.zoom-btn{position:absolute;right:25px;top:1573px;width:56px;height:56px;background:#252525;border:1px solid #2e2e2e;border-radius:14px;display:flex;align-items:center;justify-content:center}
.zoom-btn svg{width:30px;height:28px;fill:none;stroke:#e8e8e8;stroke-width:2.200px}

/* bottom toolbar */
.toolbar{position:relative;height:120px;flex:none;background:#262626;border-top:1px solid #333;border-radius:0 0 28px 28px;display:grid;grid-template-columns:1fr auto 1fr}
.tb-left{display:flex;align-items:flex-start;padding:24px 0 0 24px;gap:17px}
.say{width:238px;height:72px;background:#303030;border-radius:16px;display:flex;align-items:center;padding-left:17px;color:#8f8f8f;font-size:24px;line-height:1}
.say svg{width:37px;height:37px;fill:none;stroke:#929292;stroke-width:2px;stroke-linecap:round;margin-right:14px}
.raise{width:71px;height:72px;background:#303030;border-radius:16px;display:flex;align-items:center;justify-content:center}
.raise svg{width:38px;height:44px;fill:none;stroke:#a8a8a8;stroke-width:2px;stroke-linecap:round;stroke-linejoin:round}
.tb-center{display:flex}
.item{position:relative;width:120px;display:flex;flex-direction:column;align-items:center;padding-top:27px}
.item.wide{width:136px}
.item.share{width:134px}
.item.members{width:122px}
.item svg{height:40px;width:auto;fill:none;stroke:none}
.item .fill{fill:#dcdcdc}
.item svg>path:not([class]){stroke:#dcdcdc;stroke-width:3px}
.item .slash{stroke:#e5432f;stroke-width:2.600px}
.item .dark{stroke:#262626;stroke-width:3px;fill:none;stroke-linecap:round}
.item .dark-fill{fill:#262626}
.item .lite{stroke:#dcdcdc;stroke-width:3px}
.item .ring-d{stroke:#262626;stroke-width:3px}
.item .ringo{stroke:#dcdcdc;stroke-width:4px}
.item .fill-o{fill:none;stroke:#dcdcdc;stroke-width:2.500px}
.item .notice{fill:#f2452f}
.item .gr{fill:#35a87e}
.item .gr-in{fill:#232a28}
.item .gr-up{stroke:#e6e6e6;stroke-width:3px;fill:none}
.lab{margin-top:6px;font-size:19.500px;line-height:22px;color:#a9a9a9;white-space:nowrap}
.ai .lab{font-size:19px}
.caret{position:absolute;left:calc(50% + 48px);top:54px;width:10px;height:10px;border-left:2px solid #bdbdbd;border-top:2px solid #bdbdbd;transform:rotate(45deg) scale(.9)}
.tb-right{display:flex;justify-content:flex-end;padding-right:38px}
.leave{display:flex;flex-direction:column;align-items:center;width:80px;padding-top:28px;color:#d4432b;font-size:19.500px;line-height:22px;white-space:nowrap}
.leave svg{width:40px;height:34px;margin-bottom:9px;margin-left:2px}
.leave-fill{fill:#e8482c}
.leave-st{fill:none;stroke:#e8482c;stroke-width:2.200px}
.tooltip{position:absolute;left:1012px;top:89px;width:332px;height:46px;background:rgba(48,49,52,.96);border:1px solid #4c4d50;border-radius:8px;color:#b8b8b8;font-family:"Noto Sans CJK SC","DejaVu Sans",sans-serif;font-size:24px;line-height:44px;text-align:center;white-space:nowrap}

/* speaker popover */
.speaker{position:absolute;left:2479px;top:77px;width:482px;height:142px;background:#2d2e32;border-radius:20px;box-shadow:0 4px 14px rgba(0,0,0,.35);overflow:hidden;display:flex;flex-direction:column}
.sp-top{height:72px;flex:none;display:flex;align-items:center;padding:0 20px;border-bottom:2px solid #212226}
.sp-pill{width:30px;height:10px;background:#1f7ee0;border-radius:2px;margin-right:19px}
.sp-win{width:28px;height:30px;fill:#e4e4e6;margin-right:20px}
.sp-more{width:30px;height:30px;fill:#e4e4e6;margin-left:auto}
.sp-bottom{flex:1;display:flex;align-items:center;padding-left:19px;position:relative}
.sp-mic{width:30px;height:32px;margin-right:21px}
.sp-mic .m{fill:#e6e6e6}
.sp-mic .ms{fill:none;stroke:#e6e6e6;stroke-width:2.400px}
.sp-mic .sl{stroke:#b8402f;stroke-width:2.600px}
.sp-line{width:1px;height:40px;background:#4a4b50;margin-right:18px}
.sp-text{font-size:23px;line-height:1;color:#f0f0f0;white-space:nowrap}
.sp-name{margin-left:24px}
.sp-mark{position:absolute;right:0;top:14px;width:78px;height:44px;fill:#47484b}
```
